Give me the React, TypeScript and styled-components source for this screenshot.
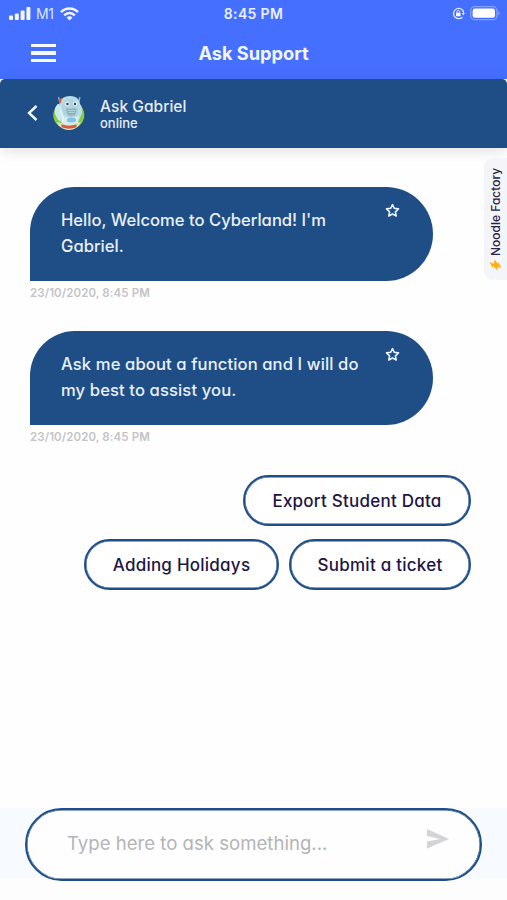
import React from "react";
import styled, { createGlobalStyle } from "styled-components";

const navy = "#1f4e87";
const ink = "#1d1546";

const GlobalStyle = createGlobalStyle`
  * { box-sizing: border-box; }
  body { margin: 0; background: #fefefe; font-family: Inter, "Liberation Sans", sans-serif; font-feature-settings: "cv11"; }
  button, input { font: inherit; font-feature-settings: inherit; letter-spacing: inherit; }
`;

const Screen = styled.main`
  position: relative;
  display: flex;
  flex-direction: column;
  width: 507px;
  height: 900px;
  overflow: hidden;
  background: #fefefe;
`;

const TopArea = styled.header`
  flex: none;
  height: 79px;
  background: #446fff;
  color: #fff;
  font-feature-settings: normal;
`;

const StatusBar = styled.div`
  display: grid;
  grid-template-columns: 1fr auto 1fr;
  align-items: center;
  height: 27px;
  padding: 0 7px 0 9px;
`;

const StatusGroup = styled.div<{ $end?: boolean }>`
  display: flex;
  align-items: center;
  gap: 5px;
  justify-content: ${(p) => (p.$end ? "flex-end" : "flex-start")};
  svg { display: block; }
`;

const Carrier = styled.span`
  font-size: 14px;
  line-height: 16px;
  color: #dce5ff;
  width: 19px;
  letter-spacing: -0.3px;
`;

const Clock = styled.span`
  margin-right: 2px;
  font-size: 14px;
  font-weight: 600;
  line-height: 16px;
  letter-spacing: 0.35px;
  color: #e9efff;
`;

const NavBar = styled.div`
  display: grid;
  grid-template-columns: 1fr auto 1fr;
  align-items: center;
  height: 52px;
  padding: 0 31px;
`;

const MenuButton = styled.button`
  display: flex;
  flex-direction: column;
  gap: 4px;
  width: 25px;
  padding: 0;
  border: 0;
  background: none;
`;

const MenuLine = styled.span`
  height: 3.5px;
  background: #f7f9ff;
`;

const NavTitle = styled.h1`
  margin: 0;
  font-size: 18.2px;
  line-height: 24px;
  font-weight: 700;
  color: #f3f6ff;
`;

const ChatHeader = styled.section`
  flex: none;
  display: flex;
  align-items: center;
  height: 68.5px;
  padding-left: 27px;
  border-radius: 5px 5px 0 0;
  background: ${navy};
  color: #e4edf9;
  box-shadow: 0 3px 14px rgba(0, 0, 0, 0.12);
  svg { display: block; }
`;

const Avatar = styled.div`
  margin-left: 15px;
  width: 32px;
  height: 36px;
`;

const Identity = styled.div`
  margin-left: 15px;
  padding-top: 2px;
`;

const BotName = styled.div`
  font-size: 15.5px;
  line-height: 18px;
  font-weight: 500;
  letter-spacing: 0.05px;
`;

const BotStatus = styled.div`
  font-size: 13px;
  line-height: 15px;
  font-weight: 500;
`;

const Conversation = styled.section`
  flex: 1;
  padding: 39px 36px 0 30px;
`;

const Message = styled.article`
  height: 144px;
`;

const Bubble = styled.div`
  display: flex;
  justify-content: space-between;
  width: 403px;
  height: 94px;
  padding: 16px 33px 0 31px;
  border-radius: 45px 47px 47px 0;
  background: ${navy};
  color: #e9f1fc;
  svg { flex: none; display: block; }
`;

const MessageText = styled.p<{ $spacing: number }>`
  margin: 4px 0 0;
  font-size: 16.6px;
  line-height: 26px;
  font-weight: 500;
  letter-spacing: ${(p) => p.$spacing}px;
  white-space: pre-line;
`;

const Timestamp = styled.time`
  display: block;
  margin-top: 5px;
  font-size: 11.5px;
  line-height: 15px;
  font-weight: 600;
  letter-spacing: 0.1px;
  color: #c4c4c6;
`;

const Suggestions = styled.div`
  display: flex;
  flex-wrap: wrap;
  justify-content: flex-end;
  gap: 13px 10px;
  margin-left: 40px;
`;

const Chip = styled.button<{ $width: number }>`
  width: ${(p) => p.$width}px;
  height: 51px;
  padding: 1px 0 0;
  border: 2px solid ${navy};
  border-radius: 26px;
  background: #fff;
  box-shadow: inset 0 0 0 0.5px ${navy};
  color: ${ink};
  font-size: 17px;
  font-weight: 500;
  letter-spacing: 0.24px;
  white-space: nowrap;
`;

const Composer = styled.footer`
  flex: none;
  height: 92px;
  padding: 0 25px;
  background: linear-gradient(#f7fafe 0 70px, #fdfdfe 70px);
`;

const InputShell = styled.div`
  display: flex;
  align-items: center;
  height: 73px;
  padding: 0 31px 0 40px;
  border: 2px solid ${navy};
  border-radius: 37px;
  background: #fefefe;
  box-shadow: inset 0 0 0 0.5px ${navy};
  svg { flex: none; display: block; margin-top: -11px; }
`;

const Input = styled.input`
  flex: 1;
  min-width: 0;
  height: 30px;
  margin-top: -3px;
  padding: 0;
  border: 0;
  outline: 0;
  background: transparent;
  font-size: 18.6px;
  &::placeholder { color: #b4b4b6; opacity: 1; }
`;

const BrandTab = styled.aside`
  position: absolute;
  right: 0;
  top: 158px;
  display: flex;
  flex-direction: column;
  align-items: center;
  gap: 3px;
  width: 23px;
  height: 122px;
  padding: 10px 1px 0 0;
  border-radius: 9px 0 0 9px;
  background: #f4f5f8;
`;

const BrandName = styled.span`
  height: 88px;
  writing-mode: vertical-rl;
  transform: rotate(180deg);
  color: #292347;
  font-size: 12px;
  line-height: 15px;
  font-weight: 500;
  white-space: nowrap;
`;

const SignalIcon = () => (
  <svg width="22" height="15" viewBox="0 0 22 15" fill="#f3f6ff">
    <rect x="0" y="9.5" width="4" height="4.5" rx="1" />
    <rect x="5.8" y="7.5" width="4" height="6.5" rx="1" />
    <rect x="11.6" y="4.5" width="4" height="9.5" rx="1" />
    <rect x="17.4" y="1" width="4" height="13" rx="1" />
  </svg>
);

const WifiIcon = () => (
  <svg width="19" height="14" viewBox="0 0 19 14" fill="none" stroke="#f3f6ff" strokeWidth="2.4">
    <path d="M1 5.1C5.8.2 13.2.2 18 5.1" />
    <path d="M4.2 8.3C7.2 5.3 11.8 5.3 14.8 8.3" />
    <path d="M6.5 10.5C8.2 8.9 10.8 8.9 12.5 10.5L9.5 13.6Z" fill="#f3f6ff" stroke="none" />
  </svg>
);

const RotationLockIcon = () => (
  <svg width="13" height="13" viewBox="0 0 13 13" fill="none" stroke="#dfe7ff" strokeWidth="1.3">
    <path d="M10.3 2.7A5.2 5.2 0 1 0 10.4 10.2" />
    <path d="M10.3 2.7a5.2 5.2 0 0 1 1.4 3.6" />
    <path d="M9.7 6h3.2l-1.6 2.4Z" fill="#dfe7ff" stroke="none" />
    <rect x="4" y="5.8" width="4.5" height="3.5" rx=".5" fill="#fff" stroke="none" />
    <path d="M4.9 6V4.8a1.35 1.35 0 0 1 2.7 0V6" strokeWidth="1" />
  </svg>
);

const BatteryIcon = () => (
  <svg width="30" height="15" viewBox="0 0 30 15">
    <rect x=".7" y=".7" width="26.2" height="13" rx="4" fill="none" stroke="#84a0ff" strokeWidth="1.3" />
    <rect x="2.6" y="2.6" width="22.4" height="9.2" rx="2.3" fill="#fff" />
    <path d="M28 5.2c2.1.5 2.1 3.6 0 4.1Z" fill="#84a0ff" />
  </svg>
);

const BackIcon = () => (
  <svg width="11" height="18" viewBox="0 0 11 18" fill="none" stroke="#f3f7fd" strokeWidth="2.4">
    <path d="M9.5 2 2 9l7.5 7" />
  </svg>
);

const RobotIcon = () => (
  <svg width="32" height="36" viewBox="0 0 32 36">
    <ellipse cx="15.8" cy="20" rx="15.5" ry="14.5" fill="#83cf41" />
    <path d="M3.5 27Q8 35 16 35T28 27Q17 31 3.5 27Z" fill="#d8e5c8" />
    <path d="M8.5 29.3Q16 32 23.5 29.3v3Q16 35 8.5 32.3Z" fill="#d65a3e" />
    <path d="M6.5 6 5.5 2M26 6l1-4" stroke="#8eb9c9" strokeWidth="1.3" />
    <path d="M6 6Q6 3 10 3l1 4-5 3Z" fill="#dc6049" />
    <path d="M8 8Q8 1 17 1t10 8q3 4 2 9l-3 7q-3 4-10 4t-9-3L4 22V10Z" fill="#b9dfe6" />
    <path d="M5 9Q1 12 2 19l3 6 3 1V12Z" fill="#cde9ed" />
    <path d="M9 10q2-5 6-6l7 1 4 6-2 10-6 2-8-4Z" fill="#aed5df" />
    <circle cx="14.2" cy="9" r="2.4" fill="#e2f1f3" />
    <circle cx="22.2" cy="9" r="2.4" fill="#e2f1f3" />
    <circle cx="14.4" cy="9" r="1.2" fill="#443c4a" />
    <circle cx="22" cy="9" r="1.2" fill="#443c4a" />
    <path d="M13 13.5h10.5l-1 6q-4.5 3-8.5-.5Z" fill="#8fb2bc" />
    <path d="M15 15.5h7M15.5 17.5h6" stroke="#b4d2d9" />
    <path d="M10 22q8 2 16-1l-1 7q-7 3-15 1Z" fill="#d8ecef" />
    <ellipse cx="18.5" cy="25" rx="4.7" ry="2.5" fill="#83c1e6" />
    <path d="M7 15q3 4 3 13" fill="none" stroke="#e2f1f3" strokeWidth="2" />
  </svg>
);

const StarIcon = () => (
  <svg width="15" height="15" viewBox="0 0 15 15" fill="none" stroke="#e9f2fe" strokeWidth="1.6" strokeLinejoin="round">
    <path d="m7.5 1.5 1.8 3.8 4.2.6-3.1 2.9.8 4.2-3.7-2-3.7 2 .8-4.2-3.1-2.9 4.2-.6Z" />
  </svg>
);

const SendIcon = () => (
  <svg width="22" height="20" viewBox="0 0 22 20" fill="#d4d4d6">
    <path d="M0 0 22 10 0 19.5V12.5L13 10 0 7Z" />
  </svg>
);

const BoltIcon = () => (
  <svg width="13" height="12" viewBox="0 0 13 12">
    <path d="M.5 3 5 4.7 5.4.5 9.2 5 9.4 3 12.5 9.2 8.7 7.6 8.4 11.5 4.1 7.1 3.6 8.9Z" fill="#ffae16" />
  </svg>
);

const messages = [
  { text: "Hello, Welcome to Cyberland! I'm\nGabriel.", spacing: 0 },
  { text: "Ask me about a function and I will do\nmy best to assist you.", spacing: 0.11 },
];

const suggestions = [
  { label: "Export Student Data", width: 228 },
  { label: "Adding Holidays", width: 195 },
  { label: "Submit a ticket", width: 182 },
];

export default function App() {
  return (
    <>
      <GlobalStyle />
      <Screen>
        <TopArea>
          <StatusBar>
            <StatusGroup><SignalIcon /><Carrier>M1</Carrier><WifiIcon /></StatusGroup>
            <Clock>8:45 PM</Clock>
            <StatusGroup $end><RotationLockIcon /><BatteryIcon /></StatusGroup>
          </StatusBar>
          <NavBar>
            <MenuButton aria-label="Menu"><MenuLine /><MenuLine /><MenuLine /></MenuButton>
            <NavTitle>Ask Support</NavTitle>
          </NavBar>
        </TopArea>
        <ChatHeader>
          <BackIcon />
          <Avatar><RobotIcon /></Avatar>
          <Identity><BotName>Ask Gabriel</BotName><BotStatus>online</BotStatus></Identity>
        </ChatHeader>
        <Conversation>
          {messages.map((m) => (
            <Message key={m.text}>
              <Bubble><MessageText $spacing={m.spacing}>{m.text}</MessageText><StarIcon /></Bubble>
              <Timestamp>23/10/2020, 8:45 PM</Timestamp>
            </Message>
          ))}
          <Suggestions>
            {suggestions.map((s) => <Chip key={s.label} $width={s.width}>{s.label}</Chip>)}
          </Suggestions>
        </Conversation>
        <Composer>
          <InputShell><Input placeholder="Type here to ask something..." /><SendIcon /></InputShell>
        </Composer>
        <BrandTab><BrandName>Noodle Factory</BrandName><BoltIcon /></BrandTab>
      </Screen>
    </>
  );
}
